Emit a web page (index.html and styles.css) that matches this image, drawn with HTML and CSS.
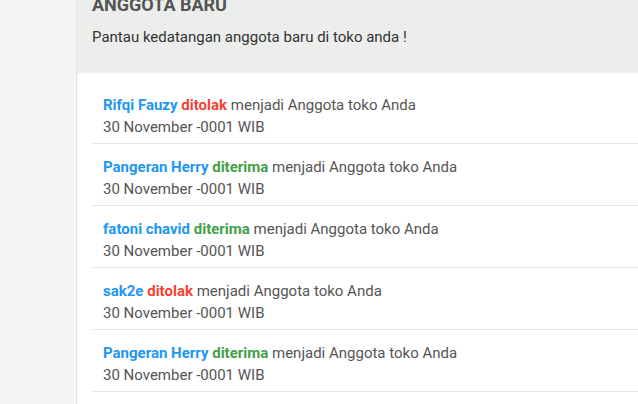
FILE: index.html
```
<!DOCTYPE html>
<html>
<head>
<meta charset="utf-8">
<link rel="stylesheet" href="styles.css">
</head>
<body>
<div class="layout">
  <aside class="sidebar"></aside>
  <main class="main">
    <header class="header">
      <h1 class="title">ANGGOTA BARU</h1>
      <p class="subtitle">Pantau kedatangan anggota baru di toko anda !</p>
    </header>
    <ul class="list">
      <li class="item">
        <div><span class="name">Rifqi Fauzy</span> <span class="rejected">ditolak</span> menjadi Anggota toko Anda</div>
        <div>30 November -0001 WIB</div>
      </li>
      <li class="item">
        <div><span class="name">Pangeran Herry</span> <span class="accepted">diterima</span> menjadi Anggota toko Anda</div>
        <div>30 November -0001 WIB</div>
      </li>
      <li class="item">
        <div><span class="name">fatoni chavid</span> <span class="accepted">diterima</span> menjadi Anggota toko Anda</div>
        <div>30 November -0001 WIB</div>
      </li>
      <li class="item">
        <div><span class="name">sak2e</span> <span class="rejected">ditolak</span> menjadi Anggota toko Anda</div>
        <div>30 November -0001 WIB</div>
      </li>
      <li class="item">
        <div><span class="name">Pangeran Herry</span> <span class="accepted">diterima</span> menjadi Anggota toko Anda</div>
        <div>30 November -0001 WIB</div>
      </li>
    </ul>
  </main>
</div>
</body>
</html>
```
FILE: styles.css
```
html, body {
  margin: 0;
  padding: 0;
  height: 100%;
  overflow: hidden;
}
body {
  font-family: Roboto, "Liberation Sans", sans-serif;
  font-size: 15px;
  color: #555;
  background: #fff;
}
.layout {
  display: flex;
  min-height: 404px;
}
.sidebar {
  width: 76px;
  flex: none;
  background: #f4f4f4;
  border-right: 1px solid #e1e1e1;
}
.main {
  flex: 1;
  background: #fff;
}
.header {
  display: flow-root;
  background: #eceeec;
  padding: 0 15px;
  height: 73px;
  box-sizing: border-box;
}
.title {
  margin: -5px 0 0;
  font-size: 18px;
  line-height: 20px;
  font-weight: 700;
  color: #555;
}
.subtitle {
  margin: 12px 0 0;
  font-size: 15px;
  line-height: 20px;
  color: #333;
}
.list {
  list-style: none;
  margin: 0 0 0 15px;
  padding: 9px 0 0;
}
.item {
  padding: 12px 11px 5px;
  line-height: 22px;
  border-bottom: 1px solid #e8e8e8;
}
.name {
  color: #2196f3;
  font-weight: 700;
}
.rejected {
  color: #f44336;
  font-weight: 700;
}
.accepted {
  color: #43a047;
  font-weight: 700;
}
```
